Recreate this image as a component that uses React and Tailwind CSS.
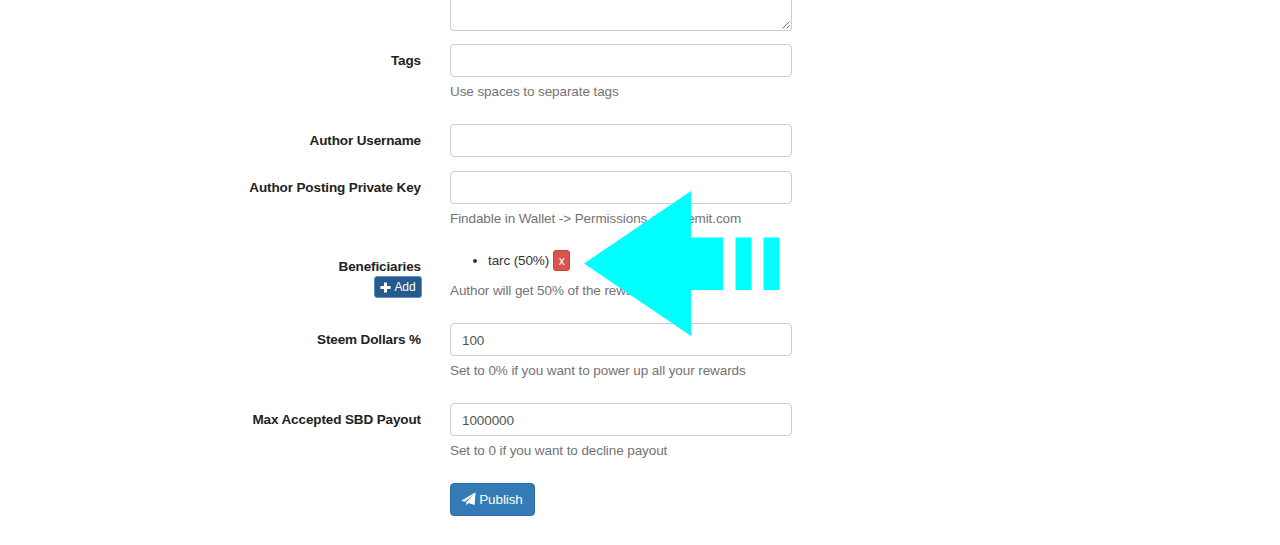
import React, { useState } from "react";

const PlusIcon = () => (
  <svg viewBox="0 0 11 11" className="h-[11px] w-[11px] fill-current">
    <path d="M4 0.4h3v3.6h3.6v3H7v3.6H4V7H0.4V4H4z" />
  </svg>
);

const SendIcon = () => (
  <svg viewBox="0 0 15 14" className="h-[14px] w-[15px] -translate-y-px fill-current">
    <path d="M14.6 0.2 0.2 8.8 4 9.8 12.6 2.4 5.2 10.4V13.6L7.2 11.1 13.6 13z" />
  </svg>
);

// Big cyan pointer laid over the form, aimed at the remove button
const PointerArrow = () => (
  <svg
    viewBox="0 0 196 146"
    className="pointer-events-none absolute left-[584px] top-[190px] h-[146px] w-[196px] fill-[#00ffff]"
  >
    <path d="M0 73.5 107 1V47.5H139V100H107V146z" />
    <rect x="151.5" y="47.5" width="16" height="52.5" />
    <rect x="179.5" y="47.5" width="16" height="52.5" />
  </svg>
);

const FormRow = ({ label, help, action, className, children }) => (
  <div className={`flex ${className}`}>
    <div className="w-[421px] shrink-0 pt-[7px] text-right text-[13.5px] font-bold leading-[19px] tracking-[-0.12px] text-[#222]">
      <label className="block">{label}</label>
      {action}
    </div>
    <div className="ml-[29px] w-[342px]">
      {children}
      {help && (
        <p className="mt-[5px] whitespace-nowrap text-[13.5px] leading-[19px] tracking-[-0.09px] text-[#737373]">
          {help}
        </p>
      )}
    </div>
  </div>
);

const TextInput = ({ value, onChange }) => (
  <input
    type="text"
    value={value}
    onChange={(e) => onChange(e.target.value)}
    className="block h-[33px] w-full rounded-[4px] border border-[#ccc] bg-white px-[11px] pt-px text-[13.5px] tracking-[-0.1px] text-[#555] outline-none"
  />
);

const App = () => {
  const [tags, setTags] = useState("");
  const [username, setUsername] = useState("");
  const [postingKey, setPostingKey] = useState("");
  const [steemDollars, setSteemDollars] = useState("100");
  const [maxPayout, setMaxPayout] = useState("1000000");

  return (
    <div className="relative h-[545px] w-[1280px] overflow-hidden bg-white font-['Liberation_Sans',Arial,sans-serif]">
      <form onSubmit={(e) => e.preventDefault()}>
        {/* Bottom of the post body textarea */}
        <div className="flex h-[44px] pl-[450px]">
          <div className="flex h-[31px] w-[342px] items-end justify-end rounded-b-[4px] border border-t-0 border-[#ccc] p-px">
            <svg viewBox="0 0 8 8" className="h-2 w-2 fill-none stroke-[#777]">
              <path d="M0.5 7.5 7.5 0.5M4.5 7.5 7.5 4.5" />
            </svg>
          </div>
        </div>

        <FormRow label="Tags" help="Use spaces to separate tags" className="h-[80px]">
          <TextInput value={tags} onChange={setTags} />
        </FormRow>

        <FormRow label="Author Username" className="h-[47px]">
          <TextInput value={username} onChange={setUsername} />
        </FormRow>

        <FormRow
          label="Author Posting Private Key"
          help="Findable in Wallet -> Permissions on steemit.com"
          className="h-[79px]"
        >
          <TextInput value={postingKey} onChange={setPostingKey} />
        </FormRow>

        <FormRow
          label="Beneficiaries"
          help="Author will get 50% of the rewards"
          className="h-[73px]"
          action={
            <button
              type="button"
              className="-mr-px float-right flex h-[22px] w-[48px] items-center justify-center gap-[3px] rounded-[3px] border border-[#5a8fd0] bg-[#265a8c] text-[12px] font-normal tracking-[-0.1px] text-white"
            >
              <PlusIcon />
              Add
            </button>
          }
        >
          <ul className="mb-[10px] flex h-[21px] items-center pl-[38px] text-[13.5px] tracking-[-0.12px] text-[#333]">
            <li className="relative flex items-center gap-[4px] before:absolute before:-left-[15px] before:h-1 before:w-1 before:rounded-full before:bg-[#333]">
              <span className="pt-px">tarc (50%)</span>
              <button
                type="button"
                className="h-[21px] w-[17px] rounded-[3px] border border-[#c9413c] bg-[#d9534f] text-[12px] leading-[18px] text-white"
              >
                x
              </button>
            </li>
          </ul>
        </FormRow>

        <FormRow
          label="Steem Dollars %"
          help="Set to 0% if you want to power up all your rewards"
          className="h-[80px]"
        >
          <TextInput value={steemDollars} onChange={setSteemDollars} />
        </FormRow>

        <FormRow
          label="Max Accepted SBD Payout"
          help="Set to 0 if you want to decline payout"
          className="h-[80px]"
        >
          <TextInput value={maxPayout} onChange={setMaxPayout} />
        </FormRow>

        <div className="pl-[450px]">
          <button
            type="submit"
            className="flex h-[33px] w-[85px] items-center justify-center gap-[3px] rounded-[4px] border border-[#2e6da4] bg-[#337ab7] pr-px pt-px text-[13.5px] tracking-[-0.1px] text-white"
          >
            <SendIcon />
            Publish
          </button>
        </div>
      </form>

      <PointerArrow />
    </div>
  );
};

export default App;
